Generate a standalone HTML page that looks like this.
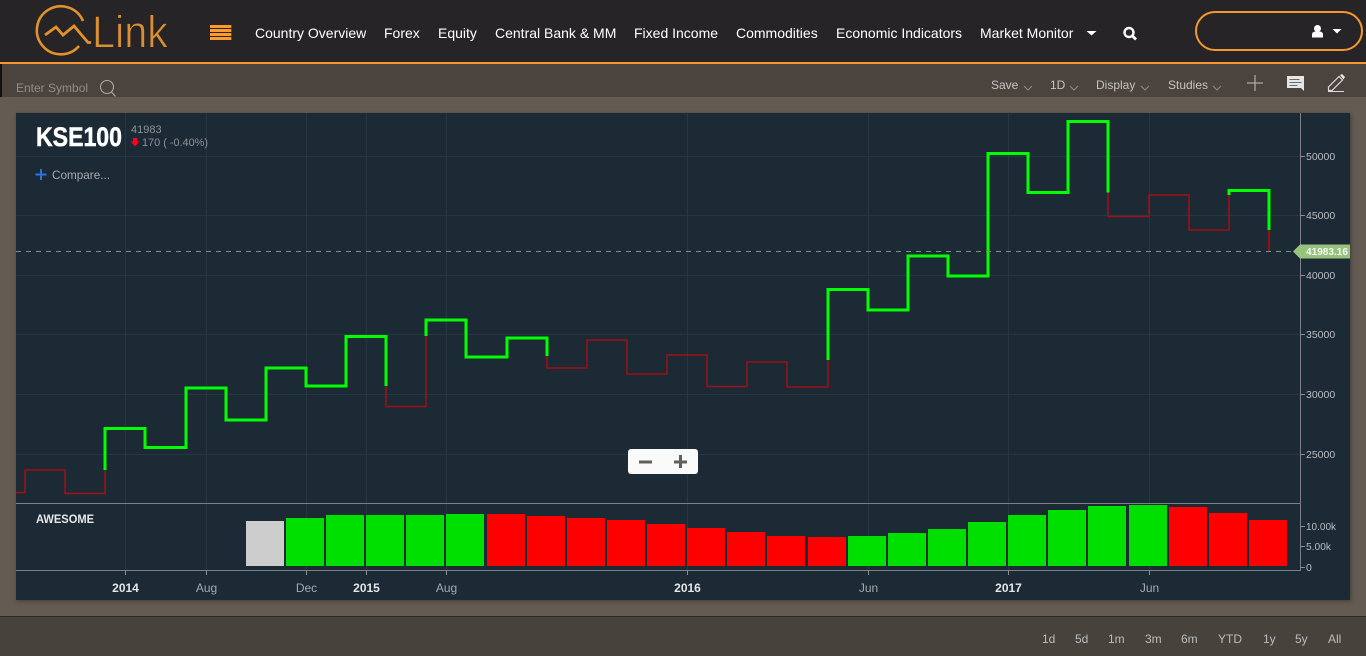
<!DOCTYPE html>
<html><head><meta charset="utf-8"><style>
html,body{margin:0;padding:0;width:1366px;height:656px;overflow:hidden;background:#645c52;font-family:"Liberation Sans",sans-serif}
.a{position:absolute;white-space:nowrap}
#nav{left:0;top:0;width:1366px;height:62px;background:#262427;border-bottom:2px solid #f7982e}
.n{position:absolute;top:25px;font-size:14px;line-height:16px;color:#fff;white-space:nowrap}
#tb{left:0;top:64px;width:1364px;height:33px;background:#4a433e;border-left:2px solid #111}
.t{position:absolute;top:78px;font-size:12px;line-height:14px;color:#c4c4c4;white-space:nowrap}
#ft{left:0;top:616px;width:1366px;height:40px;background:#48423d;border-top:1px solid #2f2a2c;box-sizing:border-box}
.f{position:absolute;top:632px;font-size:12px;line-height:14px;color:#b9bcc0;white-space:nowrap}
</style></head><body>
<div class="a" id="nav"></div>
<svg class="a" style="left:0;top:0" width="240" height="62" viewBox="0 0 240 62">
<path d="M79 46 A24 24 0 1 1 83 21" fill="none" stroke="#e2922b" stroke-width="2.600"/>
<path d="M45 35 L56 27 L63 35 L74 26 L88 42.500 H91" fill="none" stroke="#e2922b" stroke-width="2.800"/>
<text x="92" y="47.500" font-family="Liberation Sans" font-size="45" fill="#d9902f" stroke="#262427" stroke-width="0.900" paint-order="normal" textLength="76" lengthAdjust="spacingAndGlyphs">Link</text>
<g fill="#ff9a2e"><rect x="210" y="25" width="22" height="3"/><rect x="210" y="29" width="22" height="3"/><rect x="210" y="33" width="22" height="3"/><rect x="210" y="37" width="22" height="3"/></g>
<path d="M231.500 25v3M231.500 29v3M231.500 33v3M231.500 37v3" stroke="#c0202a"/>
</svg>
<span class="n" style="left:255px">Country Overview</span>
<span class="n" style="left:384px">Forex</span>
<span class="n" style="left:438px">Equity</span>
<span class="n" style="left:495px">Central Bank &amp; MM</span>
<span class="n" style="left:634px">Fixed Income</span>
<span class="n" style="left:736px">Commodities</span>
<span class="n" style="left:836px">Economic Indicators</span>
<span class="n" style="left:980px">Market Monitor</span>
<svg class="a" style="left:1080px;top:20px" width="60" height="26" viewBox="0 0 60 26">
<path d="M6.500 11h10l-5 4.500z" fill="#fff"/>
<circle cx="49" cy="12.500" r="4.500" fill="none" stroke="#fff" stroke-width="2.400"/>
<path d="M52.500 16l3.500 3.500" stroke="#fff" stroke-width="2.800"/>
</svg>
<div class="a" style="left:1195px;top:11px;width:168px;height:40px;box-sizing:border-box;border:2px solid #f7982e;border-radius:20px"></div>
<svg class="a" style="left:1305px;top:20px" width="48" height="24" viewBox="0 0 48 24">
<circle cx="12.500" cy="8.500" r="3.500" fill="#fff"/>
<path d="M7 17.500v-3q0-2.500 3-3h5q3 .5 3 3v3z" fill="#fff"/>
<path d="M27.500 9h9l-4.500 4.500z" fill="#fff"/>
</svg>

<div class="a" id="tb"></div>
<span class="t" style="left:16px;top:81px;color:#8e8e8e">Enter Symbol</span>
<svg class="a" style="left:96px;top:78px" width="24" height="20" viewBox="0 0 24 20">
<circle cx="11" cy="9" r="6.500" fill="none" stroke="#aaa" stroke-width="1.100"/>
<path d="M15.500 14l4 4.500" stroke="#aaa" stroke-width="1.200"/>
</svg>
<span class="t" style="left:991px">Save</span>
<span class="t" style="left:1050px">1D</span>
<span class="t" style="left:1096px">Display</span>
<span class="t" style="left:1168px">Studies</span>
<svg class="a" style="left:1010px;top:70px" width="356" height="28" viewBox="1010 70 356 28">
<g fill="none" stroke="#8b8b8b" stroke-width="1">
<path d="M1024 86l4 4 4-4"/><path d="M1070 86l4 4 4-4"/><path d="M1141 86l4 4 4-4"/><path d="M1213 86l4 4 4-4"/>
</g>
<path d="M1255 75v16M1247 83h16" stroke="#a8a8a4" stroke-width="1.300"/>
<path d="M1287 76h17v15l-3-3h-14z" fill="#e6e6e6"/>
<path d="M1289.500 79.500h10M1289.500 82.500h12M1289.500 85.500h8" stroke="#6a6a6a" stroke-width="1"/>
<path d="M1328.500 90.500v-3.500l10.500-10.500 3.500 3.500-10.500 10.500z" fill="none" stroke="#dcdcdc" stroke-width="1.200"/>
<path d="M1340 75l2-1 3 3-1.500 2.500z" fill="#e6e6e6"/>
<path d="M1328 91.500h16" stroke="#dcdcdc" stroke-width="1"/>
</svg>

<div class="a" style="left:16px;top:113px;width:1334px;height:487px;background:#1c2a36;box-shadow:1px 1px 4px rgba(0,0,0,.35)"></div>
<svg class="a" style="left:0;top:0" width="1366" height="656" viewBox="0 0 1366 656" font-family="Liberation Sans">
<g stroke="#263743" stroke-width="1" fill="none">
<path d="M125.500 113V570M206.500 113V570M306.500 113V570M366.500 113V570M446.500 113V570M687.500 113V570M868.500 113V570M1008.500 113V570M1149.500 113V570"/>
<path d="M16 156.500H1300M16 215.500H1300M16 275.500H1300M16 334.500H1300M16 394.500H1300M16 454.500H1300"/>
</g>
<g fill="none" stroke-linejoin="miter">
<path d="M16 492.500H25V470H65V493.500H105V470" stroke="#a01016" stroke-width="1.500"/>
<path d="M386 386V406.500H426V336" stroke="#a01016" stroke-width="1.500"/>
<path d="M547 356V368H587V340H627V374H667V355H707V386.500H747V362H787V387H828V360" stroke="#a01016" stroke-width="1.500"/>
<path d="M1108 192.500V216.500H1149V195H1189V230H1229V195" stroke="#a01016" stroke-width="1.500"/>
<path d="M1269 230V251" stroke="#a01016" stroke-width="1.800"/>
<g stroke="#00ff00" stroke-width="3">
<path d="M105 470V428.500H145V447.500H186V388H226V420H266V368H306V386H346V336.500H386V386"/>
<path d="M426 336V320H466V357H507V338H547V356"/>
<path d="M828 360V289.500H868V310H908V256H948V276H988V153.500H1028V192.500H1068V121.500H1108V192.500"/>
<path d="M1229 195V190.500H1269V230"/>
</g>
</g>
<path d="M16 251.500H1293" stroke="#7a9480" stroke-width="1" stroke-dasharray="5 5"/>
<path d="M16 503.500H1300M16 570.500H1300M1300.500 113V571" stroke="#7c8084" stroke-width="1" fill="none"/>
<path d="M125.500 570v5M206.500 570v5M306.500 570v5M366.500 570v5M446.500 570v5M687.500 570v5M868.500 570v5M1008.500 570v5M1149.500 570v5" stroke="#8a8e92"/>
<path d="M1300 156.500h5M1300 215.500h5M1300 275.500h5M1300 334.500h5M1300 394.500h5M1300 454.500h5M1300 526.500h5M1300 546.500h5M1300 567.500h5" stroke="#8a8e92"/>
<rect x="246" y="521" width="38" height="45" fill="#cccccc"/>
<g fill="#00e000">
<rect x="286" y="518" width="38" height="48"/><rect x="326" y="515" width="38" height="51"/><rect x="366" y="515" width="38" height="51"/><rect x="406" y="515" width="38" height="51"/><rect x="446" y="514" width="38" height="52"/>
<rect x="848" y="536" width="38" height="30"/><rect x="888" y="533" width="38" height="33"/><rect x="928" y="529" width="38" height="37"/><rect x="968" y="522" width="38" height="44"/><rect x="1008" y="515" width="38" height="51"/><rect x="1048" y="510" width="38" height="56"/><rect x="1088" y="506" width="38" height="60"/><rect x="1129" y="505" width="38" height="61"/>
</g>
<g fill="#ff0000">
<rect x="487" y="514" width="38" height="52"/><rect x="527" y="516" width="38" height="50"/><rect x="567" y="518" width="38" height="48"/><rect x="607" y="520" width="38" height="46"/><rect x="647" y="524" width="38" height="42"/><rect x="687" y="528" width="38" height="38"/><rect x="727" y="532" width="38" height="34"/><rect x="767" y="536" width="38" height="30"/><rect x="808" y="537" width="38" height="29"/>
<rect x="1169" y="507" width="38" height="59"/><rect x="1209" y="513" width="38" height="53"/><rect x="1249" y="520" width="38" height="46"/>
</g>
<g font-size="10.500" fill="#b9bdc1">
<text x="1306" y="160">50000</text><text x="1306" y="219">45000</text><text x="1306" y="279">40000</text><text x="1306" y="338">35000</text><text x="1306" y="398">30000</text><text x="1306" y="458">25000</text>
<text x="1306" y="530" textLength="30" lengthAdjust="spacingAndGlyphs">10.00k</text><text x="1306" y="550" textLength="25" lengthAdjust="spacingAndGlyphs">5.00k</text><text x="1306" y="571">0</text>
</g>
<path d="M1293 251.500l7-7h50v14h-50z" fill="#96c47e"/>
<text x="1306" y="255" font-size="10.500" font-weight="bold" fill="#f4f8f0" textLength="42" lengthAdjust="spacingAndGlyphs">41983.16</text>
<g font-size="12" text-anchor="middle" fill="#a5aaae">
<text x="125.500" y="592" font-weight="bold" fill="#e4e6e8">2014</text>
<text x="206.500" y="592">Aug</text><text x="306.500" y="592">Dec</text>
<text x="366.500" y="592" font-weight="bold" fill="#e4e6e8">2015</text>
<text x="446.500" y="592">Aug</text>
<text x="687.500" y="592" font-weight="bold" fill="#e4e6e8">2016</text>
<text x="868.500" y="592">Jun</text>
<text x="1008.500" y="592" font-weight="bold" fill="#e4e6e8">2017</text>
<text x="1149.500" y="592">Jun</text>
</g>
<text x="36" y="523" font-size="11.500" font-weight="bold" fill="#e6e8ea" textLength="58" lengthAdjust="spacingAndGlyphs">AWESOME</text>
<text x="36" y="146" font-size="27" font-weight="bold" fill="#fff" stroke="#fff" stroke-width="0.500" textLength="86" lengthAdjust="spacingAndGlyphs">KSE100</text>
<text x="131" y="133" font-size="11" fill="#8d9297">41983</text>
<path d="M133 138h4v3.500h2.500l-4.500 5-4.500-5h2.500z" fill="#ff0022"/>
<text x="142" y="146" font-size="11" fill="#8d9297" textLength="66" lengthAdjust="spacingAndGlyphs">170 ( -0.40%)</text>
<path d="M41 169v11M35.500 174.500h11" stroke="#2a74e0" stroke-width="2"/>
<text x="52" y="179" font-size="12" fill="#a5aaae" textLength="58" lengthAdjust="spacingAndGlyphs">Compare...</text>
<rect x="628" y="449" width="70" height="25" rx="3" fill="#fafafa"/>
<path d="M639 462h13M674 462h13M680.500 455v13" stroke="#606060" stroke-width="3"/>
</svg>

<div class="a" id="ft"></div>
<span class="f" style="left:1042px">1d</span>
<span class="f" style="left:1075px">5d</span>
<span class="f" style="left:1108px">1m</span>
<span class="f" style="left:1145px">3m</span>
<span class="f" style="left:1181px">6m</span>
<span class="f" style="left:1218px">YTD</span>
<span class="f" style="left:1263px">1y</span>
<span class="f" style="left:1295px">5y</span>
<span class="f" style="left:1328px">All</span>
</body></html>
